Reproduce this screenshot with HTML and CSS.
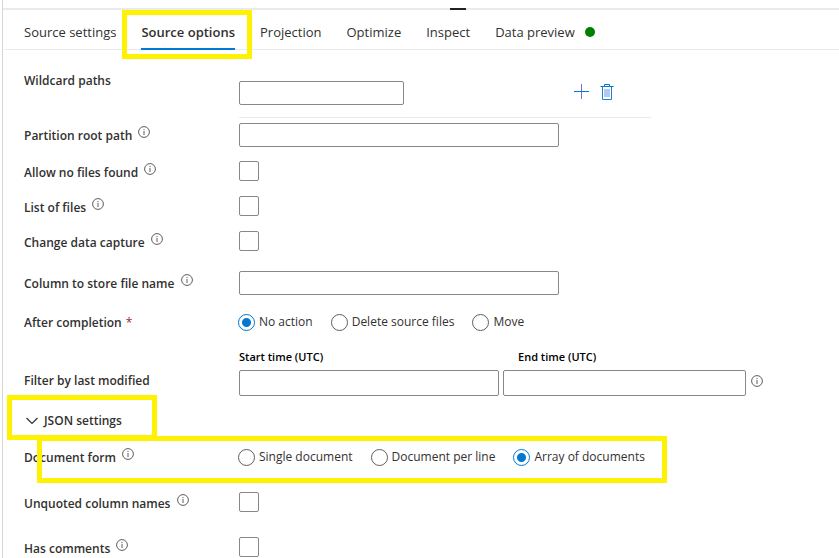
FILE: index.html
```html
<!DOCTYPE html>
<html lang="en">
<head>
<meta charset="utf-8">
<title>Source options</title>
<link rel="stylesheet" href="styles.css">
</head>
<body>
<svg class="sprite" aria-hidden="true">
  <symbol id="info" viewBox="0 0 12 12">
    <circle cx="6" cy="6" r="5.4" fill="none" stroke="currentColor" stroke-width="1"/>
    <path d="M6 5v4M6 3v1.1" fill="none" stroke="currentColor" stroke-width="1"/>
  </symbol>
</svg>
<main class="panel">
  <div class="splitter"><span class="grip"></span></div>
  <nav class="tabs">
    <a class="tab" href="#settings">Source settings</a>
    <a class="tab active marked" href="#options">Source options</a>
    <a class="tab" href="#projection">Projection</a>
    <a class="tab" href="#optimize">Optimize</a>
    <a class="tab" href="#inspect">Inspect</a>
    <a class="tab" href="#preview">Data preview<span class="dot"></span></a>
  </nav>
  <form class="form">
    <div class="row wildcard">
      <label class="label" for="wildcard">Wildcard paths</label>
      <div class="path-item">
        <input class="text short" id="wildcard" type="text">
        <div class="actions">
          <button class="icon-button" type="button" aria-label="Add">
            <svg width="16" height="16" viewBox="0 0 16 16"><path d="M7.500 0v15" stroke="#7a70d8" fill="none"/><path d="M0 7.500h15" stroke="#0078d4" fill="none"/></svg>
          </button>
          <button class="icon-button" type="button" aria-label="Delete">
            <svg width="14" height="16" viewBox="0 0 14 16" fill="none"><path d="M2.500 2.500v13h9v-13" stroke="#1683d8"/><path d="M0.500 2.500h13M4.500 2.500v-2h5v2" stroke="#0078d4"/><path d="M5 5v8M7 5v8M9 5v8" stroke="#6f8fdc"/></svg>
          </button>
        </div>
      </div>
    </div>
    <div class="row partition">
      <label class="label" for="root">Partition root path <svg class="info"><use href="#info"/></svg></label>
      <input class="text long" id="root" type="text">
    </div>
    <div class="checks">
      <div class="row check">
        <label class="label" for="nofiles">Allow no files found <svg class="info"><use href="#info"/></svg></label>
        <input class="box" id="nofiles" type="checkbox">
      </div>
      <div class="row check">
        <label class="label" for="list">List of files <svg class="info"><use href="#info"/></svg></label>
        <input class="box" id="list" type="checkbox">
      </div>
      <div class="row check">
        <label class="label" for="cdc">Change data capture <svg class="info"><use href="#info"/></svg></label>
        <input class="box" id="cdc" type="checkbox">
      </div>
    </div>
    <div class="row column-name">
      <label class="label" for="column">Column to store file name <svg class="info"><use href="#info"/></svg></label>
      <input class="text long" id="column" type="text">
    </div>
    <div class="row completion" role="radiogroup" aria-labelledby="after">
      <span class="label" id="after">After completion <span class="required">*</span></span>
      <div class="radios">
        <label class="choice"><input class="radio" type="radio" name="after" checked>No action</label>
        <label class="choice"><input class="radio" type="radio" name="after">Delete source files</label>
        <label class="choice"><input class="radio" type="radio" name="after">Move</label>
      </div>
    </div>
    <div class="row filter">
      <span class="label">Filter by last modified</span>
      <div class="times">
        <label class="time-label" for="start">Start time (UTC)</label>
        <label class="time-label end" for="end">End time (UTC)</label>
        <input class="text time" id="start" type="text">
        <input class="text time" id="end" type="text">
        <svg class="info plain"><use href="#info"/></svg>
      </div>
    </div>
    <div class="section">
      <button class="section-toggle marked" type="button" aria-expanded="true">
        <svg width="12" height="8" viewBox="0 0 12 8"><path d="M0.500 1l5.500 5.500L11.500 1" fill="none" stroke="currentColor" stroke-width="1.200"/></svg>
        JSON settings
      </button>
    </div>
    <div class="row document marked" role="radiogroup" aria-labelledby="form">
      <span class="label" id="form">Document form <svg class="info"><use href="#info"/></svg></span>
      <div class="radios">
        <label class="choice"><input class="radio" type="radio" name="form">Single document</label>
        <label class="choice"><input class="radio" type="radio" name="form">Document per line</label>
        <label class="choice"><input class="radio" type="radio" name="form" checked>Array of documents</label>
      </div>
    </div>
    <div class="json-checks">
      <div class="row check">
        <label class="label" for="unquoted">Unquoted column names <svg class="info"><use href="#info"/></svg></label>
        <input class="box" id="unquoted" type="checkbox">
      </div>
      <div class="row check">
        <label class="label" for="comments">Has comments <svg class="info"><use href="#info"/></svg></label>
        <input class="box" id="comments" type="checkbox">
      </div>
    </div>
  </form>
</main>
</body>
</html>
```
FILE: styles.css
```css
*, *::after { box-sizing: border-box; }

body {
  margin: 0;
  background: #fff;
  color: #323130;
  font-family: "Segoe UI", "Open Sans", "Noto Sans", sans-serif;
  font-size: 12px;
  line-height: 20px;
}

.sprite { position: absolute; width: 0; height: 0; }

.panel {
  min-height: 100vh;
  margin-left: 2px;
  border-left: 1px solid #d6d6d6;
}

.splitter {
  padding-top: 8px;
  height: 10px;
  background: linear-gradient(#eaeaea, #eaeaea) bottom / 100% 2px no-repeat;
}

.grip {
  display: block;
  width: 16px;
  height: 2px;
  margin-left: 447px;
  background: #222;
}

.tabs {
  display: flex;
  gap: 25px;
  height: 40px;
  margin-left: 1px;
  padding-left: 20px;
  border-bottom: 1px solid #eaeaea;
}

.tab {
  display: flex;
  align-items: center;
  height: 40px;
  padding-top: 6px;
  border-bottom: 2px solid transparent;
  color: #323130;
  font-size: 13px;
  text-decoration: none;
  white-space: nowrap;
}

.tab.active {
  border-bottom-color: #0078d4;
  font-weight: 600;
}

.dot {
  width: 10px;
  height: 10px;
  margin-left: 10px;
  border-radius: 50%;
  background: #008000;
}

/* Highlighter frames laid over the controls */
.marked { position: relative; }

.marked::after {
  content: "";
  position: absolute;
  border: 5px solid #fff200;
  pointer-events: none;
}

.tab.marked::after { inset: 0 -17px -11px -19px; }
.section-toggle.marked::after { inset: -15px -35px -10px -19px; }
.document.marked::after { top: -10px; left: 13px; width: 630px; height: 47px; }

.form { padding-left: 21px; }

.row {
  display: grid;
  grid-template-columns: 215px 1fr;
  align-items: center;
}

.label {
  padding-top: 2px;
  font-weight: 600;
  white-space: nowrap;
}

.info {
  width: 12px;
  height: 12px;
  margin-left: 3px;
  vertical-align: 2px;
  color: #605e5c;
}

.info.plain { margin: 0 0 4px 1px; }

.required {
  margin-left: 1px;
  color: #a4262c;
  font-weight: 400;
}

.text {
  height: 24px;
  padding: 2px 8px;
  border: 1px solid #8a8886;
  border-radius: 2px;
  background: #fff;
  font: inherit;
}

.short { width: 165px; }
.long { width: 320px; }

.wildcard { align-items: start; }
.wildcard .label { padding-top: 21px; }

.path-item {
  display: flex;
  align-items: center;
  justify-content: space-between;
  width: 412px;
  padding: 31px 37px 12px 0;
  border-bottom: 1px solid #eaeaea;
}

.actions {
  display: flex;
  gap: 10px;
  padding-bottom: 2px;
}

.icon-button {
  display: flex;
  padding: 0;
  border: 0;
  background: none;
}

.partition { margin-top: 5px; }

.checks {
  display: grid;
  gap: 15px;
  margin-top: 14px;
}

.check {
  grid-template-rows: 20px;
  align-items: start;
}

.box {
  appearance: none;
  width: 20px;
  height: 20px;
  margin: 0;
  border: 1px solid #8a8886;
  border-radius: 2px;
}

.column-name { margin-top: 20px; }
.completion { margin-top: 16px; }

.radios {
  display: flex;
  gap: 18px;
  margin-left: -1px;
}

.choice {
  display: flex;
  align-items: center;
  gap: 4px;
  white-space: nowrap;
}

.radio {
  appearance: none;
  width: 17px;
  height: 17px;
  margin: 0;
  border: 1px solid #605e5c;
  border-radius: 50%;
}

.radio:checked {
  border-color: #0078d4;
  background: radial-gradient(circle, #0078d4 4px, transparent 5px);
}

.filter {
  align-items: end;
  margin-top: 15px;
}

.filter .label { padding-bottom: 5px; }

.times {
  display: grid;
  grid-template-columns: 260px 243px auto;
  justify-content: start;
  align-items: center;
  gap: 4px;
}

.time-label {
  grid-column: 1;
  color: #000;
  font-size: 11px;
  font-weight: 600;
  line-height: 18px;
}

.time-label.end {
  grid-column: 2 / 4;
  padding-left: 15px;
}

.time { width: 100%; height: 26px; }

.section { margin-top: 14px; }

.section-toggle {
  display: flex;
  align-items: center;
  gap: 6px;
  height: 20px;
  margin-left: 2px;
  padding: 2px 0 0;
  border: 0;
  background: none;
  color: #323130;
  font: inherit;
  font-weight: 600;
}

.document { margin-top: 16px; }

.json-checks {
  display: grid;
  gap: 25px;
  margin-top: 24px;
}
```
